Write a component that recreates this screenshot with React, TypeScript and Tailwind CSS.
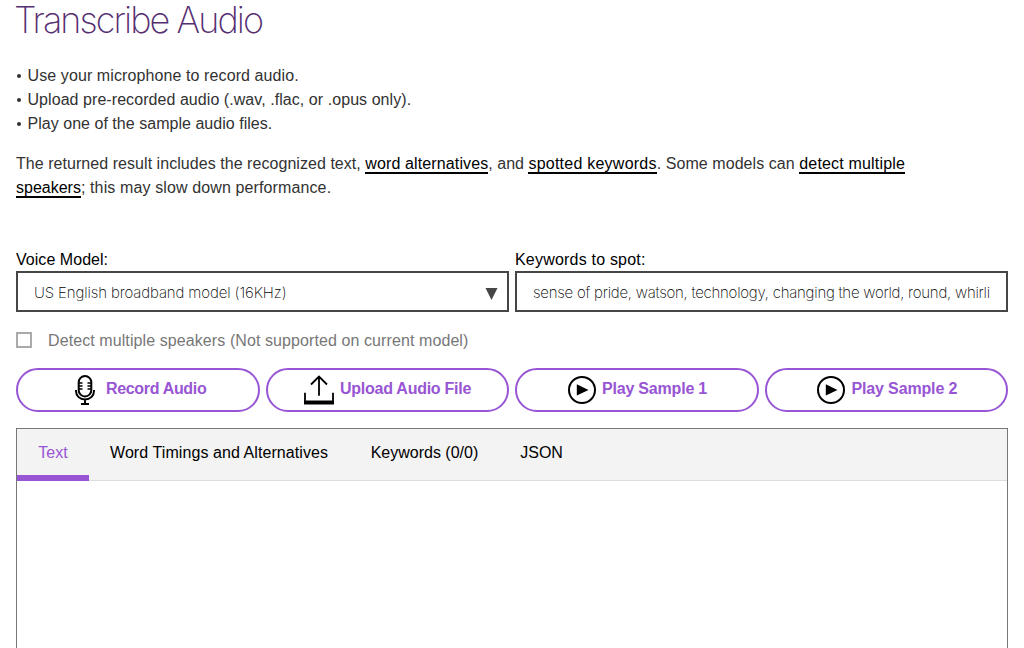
import type { ReactNode } from "react";

function MicIcon() {
  return (
    <svg width="20" height="31" viewBox="0 0 20 31" fill="none" stroke="#000" strokeWidth="2">
      <rect x="3.7" y="1" width="12.6" height="20.500" rx="6.300" />
      <path d="M1 15v1c0 5 4 8.500 9 8.500s9-3.500 9-8.500v-1M10 24.500V29M6 29h8" />
      <path d="M4 8h3.500M4 11h3.500M4 14h3.500M12.500 8H16M12.500 11H16M12.500 14H16" strokeWidth="1.700" />
    </svg>
  );
}

function UploadIcon() {
  return (
    <svg width="30" height="30" viewBox="0 0 30 30" fill="none" stroke="#000">
      <path d="M1 17.800v10M29 17.800v10" strokeWidth="1.800" />
      <path d="M0 27.500h30" strokeWidth="4" />
      <path d="M15 20.800V2M7 9.500L15 1.500l8 8" strokeWidth="1.800" />
    </svg>
  );
}

function PlayIcon() {
  return (
    <svg width="28" height="28" viewBox="0 0 28 28">
      <circle cx="14" cy="14" r="13" fill="none" stroke="#000" strokeWidth="2" />
      <path d="M8.800 8.200v11.400l11.700-5.700z" fill="#000" />
    </svg>
  );
}

function PillButton({ icon, label, className }: { icon: ReactNode; label: string; className: string }) {
  return (
    <button className={`flex h-11 items-start rounded-full border-2 border-[#9855d4] bg-white font-bold whitespace-nowrap text-[#9855d4] ${className}`}>
      {icon}
      <span className="mt-[7px] leading-6">{label}</span>
    </button>
  );
}

function TermLink({ children, className = "" }: { children: ReactNode; className?: string }) {
  return <a href="#" className={`border-b-2 border-black text-black ${className}`}>{children}</a>;
}

const notes = [
  { text: "Use your microphone to record audio.", spacing: "tracking-[0.1px]" },
  { text: "Upload pre-recorded audio (.wav, .flac, or .opus only).", spacing: "tracking-[0.06px]" },
  { text: "Play one of the sample audio files.", spacing: "tracking-[0.03px]" },
];

export default function App() {
  return (
    <main className="flex h-[648px] flex-col overflow-hidden bg-white px-4 font-['Liberation_Sans',sans-serif] text-base text-[#323232]">
      <h1 className="-ml-0.5 h-16 shrink-0 font-['Inter',sans-serif] text-[36px] leading-[40px] font-extralight tracking-[-1.94px] text-[#562f72]">Transcribe Audio</h1>
      <ul className="shrink-0">
        {notes.map((n) => (
          <li key={n.text} className="flex h-6 leading-6">
            <span className="flex w-[11.500px] items-center pl-px"><span className="size-1 rounded-full bg-[#323232]" /></span>
            <span className={n.spacing}>{n.text}</span>
          </li>
        ))}
      </ul>
      <p className="mt-4 h-12 shrink-0 leading-6 whitespace-nowrap">
        <span className="tracking-[0.05px]">The returned result includes the recognized text, </span>
        <TermLink className="tracking-[0.12px]">word alternatives</TermLink>
        <span>, and </span>
        <TermLink className="tracking-[0.24px]">spotted keywords</TermLink>
        <span className="tracking-[0.06px]">. Some models can </span>
        <TermLink className="tracking-[0.18px]">detect multiple</TermLink>
        <br />
        <TermLink>speakers</TermLink>
        <span className="tracking-[0.12px]">; this may slow down performance.</span>
      </p>

      <div className="mt-[47px] grid shrink-0 grid-cols-2 gap-1.5 text-black">
        <div>
          <div className="h-6 leading-[26px] tracking-[0.04px]">Voice Model:</div>
          <div className="flex h-[41px] items-center justify-between border-2 border-[#464646] pr-[9px] pl-4">
            <span className="mt-[3px] font-['Inter',sans-serif] text-[15px] font-extralight tracking-[-0.12px]">US English broadband model (16KHz)</span>
            <svg width="13" height="12" viewBox="0 0 13 12" className="mt-[5px]"><path d="M.5 0h12l-6 12z" fill="#464646" /></svg>
          </div>
        </div>
        <div>
          <div className="h-6 leading-[26px] tracking-[0.2px]">Keywords to spot:</div>
          <div className="flex h-[41px] items-center border-2 border-[#464646] px-4">
            <span className="mt-[3px] font-['Inter',sans-serif] text-[15px] font-extralight tracking-[-0.24px] whitespace-nowrap">sense of pride, watson, technology, changing the world, round, whirli</span>
          </div>
        </div>
      </div>

      <div className="mt-4 flex h-6 shrink-0 items-center gap-4 text-[#777]">
        <span className="size-4 border-2 border-[#aaa]" />
        <span className="mt-0.5 tracking-[0.09px]">Detect multiple speakers (Not supported on current model)</span>
      </div>

      <div className="mt-4 grid shrink-0 grid-cols-4 gap-1.5">
        <PillButton icon={<span className="mt-[5px] mr-[11px]"><MicIcon /></span>} label="Record Audio" className="pl-[57px] tracking-[-0.33px]" />
        <PillButton icon={<span className="mt-[5px] mr-[6.500px]"><UploadIcon /></span>} label="Upload Audio File" className="pl-[36px] tracking-[-0.25px]" />
        <PillButton icon={<span className="mt-[6px] mr-[6.500px]"><PlayIcon /></span>} label="Play Sample 1" className="pl-[50.500px] tracking-[-0.2px]" />
        <PillButton icon={<span className="mt-[6px] mr-[7px]"><PlayIcon /></span>} label="Play Sample 2" className="pl-[50px] tracking-[-0.15px]" />
      </div>

      <section className="mt-4 h-[240px] shrink-0 border border-[#777]">
        <nav className="flex h-[52px] border-b border-[#dedede] bg-[#f3f3f3] leading-[47px] text-black">
          <button className="h-[52px] w-[72px] border-b-6 border-[#9855d4] text-[#9855d4]">Text</button>
          <button className="ml-[21px] h-[47px] tracking-[0.08px]">Word Timings and Alternatives</button>
          <button className="ml-[42.500px] h-[47px]">Keywords (0/0)</button>
          <button className="ml-[42px] h-[47px]">JSON</button>
        </nav>
      </section>
    </main>
  );
}
